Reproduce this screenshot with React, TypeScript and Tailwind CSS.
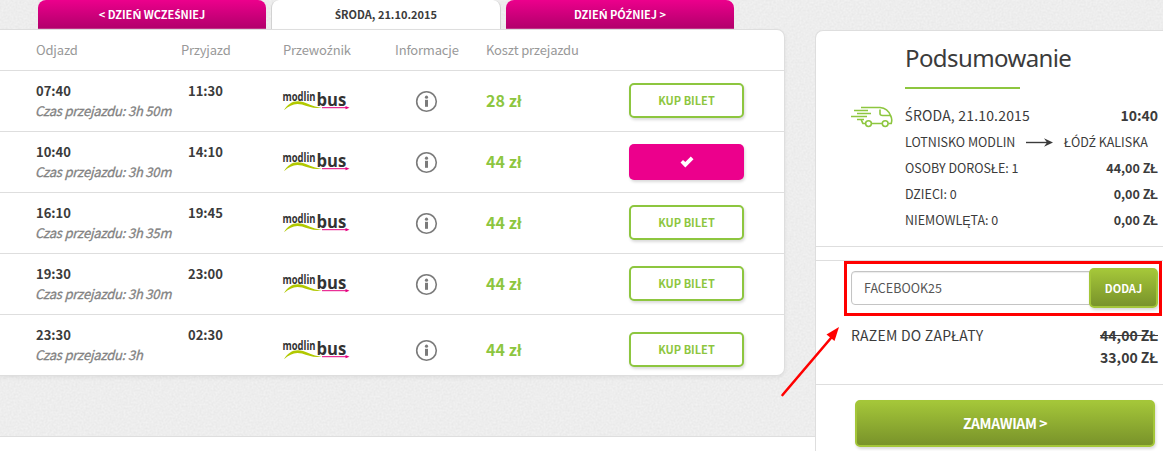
import React from 'react';

interface Ride {
  departure: string;
  arrival: string;
  duration: string;
  price: string;
  selected?: boolean;
}

const rides: Ride[] = [
  { departure: '07:40', arrival: '11:30', duration: '3h 50m', price: '28 zł' },
  { departure: '10:40', arrival: '14:10', duration: '3h 30m', price: '44 zł', selected: true },
  { departure: '16:10', arrival: '19:45', duration: '3h 35m', price: '44 zł' },
  { departure: '19:30', arrival: '23:00', duration: '3h 30m', price: '44 zł' },
  { departure: '23:30', arrival: '02:30', duration: '3h', price: '44 zł' },
];

const passengers = [
  { label: 'OSOBY DOROSŁE: 1', price: '44,00 ZŁ' },
  { label: 'DZIECI: 0', price: '0,00 ZŁ' },
  { label: 'NIEMOWLĘTA: 0', price: '0,00 ZŁ' },
];

const columns = 'grid grid-cols-[152px_95px_133px_70px_143px_115px] pl-[36px]';

// The CJK family has no acute consonants, so those letters come from Noto Sans
const Polish: React.FC<{ text: string }> = ({ text }) => (
  <span className="whitespace-pre">
    {text.split(/([ŚŹŃź])/).map((part, i) =>
      i % 2 ? <span key={i} className="font-['Noto_Sans',sans-serif] leading-none">{part}</span> : part
    )}
  </span>
);

const CarrierLogo: React.FC = () => (
  <svg width="68" height="22" viewBox="0 0 68 22" className="block overflow-visible">
    <text transform="translate(-0.5 10.5) scale(0.82 1)" fontSize="11.5" fontWeight="700" fill="#333" className="font-['Open_Sans',sans-serif]">modlin</text>
    <text transform="translate(33.5 16) scale(0.9 1)" fontSize="18.5" fontWeight="700" fill="#333" className="font-['Open_Sans',sans-serif]">bus</text>
    <path d="M1 20.3C5 12.8 12 9.5 20 12C28 15 32 17.2 39 17.7C31 19 25 16.5 19 14.6C12 12.8 7 15 1 20.3Z" fill="#b1c800" />
    <path d="M39 17.7H64" stroke="#e5007e" strokeWidth="1" />
    <path d="M62.5 16L66.5 17.7L62.5 19.3Z" fill="#e5007e" />
  </svg>
);

const InfoIcon: React.FC = () => (
  <svg width="22" height="22" viewBox="0 0 22 22" className="-ml-px block overflow-visible">
    <circle cx="11.5" cy="11.5" r="9.8" fill="none" stroke="#7b7b7b" strokeWidth="1.6" />
    <circle cx="11.5" cy="7.2" r="1.6" fill="#7b7b7b" />
    <path d="M10 9.8h3v7h-3z" fill="#7b7b7b" />
  </svg>
);

const VanIcon: React.FC = () => (
  <svg width="42" height="22" viewBox="0 0 42 22" fill="none" stroke="#8dc63f" strokeWidth="1.6" className="block">
    <path d="M10 1.5H29C34 2 38 5.5 39.5 9.5C41 12 41 15 40.2 17.5H37.5M31 17.5H20.5M14.5 17.5H12C11 16 11 14.5 10 13.8" />
    <path d="M29 3.5V7.5C29 9 30 9.5 31.5 9.5H39" />
    <path d="M3 4.5H17M6 7.5H20M0 10.5H16M6 13.5H13" />
    <circle cx="17.5" cy="17.6" r="2.9" />
    <circle cx="34.2" cy="17.6" r="2.9" />
  </svg>
);

const RideRow: React.FC<{ ride: Ride; last: boolean }> = ({ ride, last }) => (
  <div className={`${columns} h-[61px] ${last ? '' : 'border-b border-[#dedede]'}`}>
    <div className="pt-[10px] leading-5 whitespace-nowrap">
      <div className="text-[13px] font-bold text-[#3b3b3b]">{ride.departure}</div>
      <div className="-ml-px text-[13px] tracking-[-0.2px] text-[#828282] italic [-webkit-text-stroke:0.3px_#828282]">Czas przejazdu: {ride.duration}</div>
    </div>
    <div className="pt-[10px] text-[13px] leading-5 font-bold text-[#3b3b3b]">{ride.arrival}</div>
    <div className={last ? 'pt-[24px]' : 'pt-[19px]'}>
      <CarrierLogo />
    </div>
    <div className={last ? 'pt-[24px]' : 'pt-[19px]'}>
      <InfoIcon />
    </div>
    <div className={`text-[16px] leading-6 font-bold tracking-[0.1px] text-[#8dc63f] ${last ? 'pt-[22px]' : 'pt-[17px]'}`}>{ride.price}</div>
    <div className={last ? 'pt-[17px]' : 'pt-[12px]'}>
      {ride.selected ? (
        <button className="flex h-[36px] w-[115px] items-center justify-center rounded-[5px] bg-[#ec008c] shadow-[1px_2px_3px_rgba(0,0,0,0.15)]">
          <svg width="14" height="12" viewBox="0 0 14 12">
            <path d="M0.5 6.5L3 4L5.3 6.1L10.8 0.6L13.5 3.2L5.3 11.4Z" fill="#fff" />
          </svg>
        </button>
      ) : (
        <button className="flex h-[35px] w-[115px] items-center justify-center rounded-[5px] border-2 border-[#8dc63f] bg-white text-[11px] font-bold text-[#8dc63f] shadow-[1px_2px_3px_rgba(0,0,0,0.15)]">
          KUP BILET
        </button>
      )}
    </div>
  </div>
);

const Timetable: React.FC = () => (
  <div className="flex w-[815px] shrink-0 flex-col">
    <div className="flex h-[29px] gap-[5px] pl-[38px] text-[11px] font-bold">
      <div className="flex w-[228px] items-center justify-center rounded-t-lg bg-linear-to-b from-[#ec008c] to-[#b1006b] text-white shadow-[inset_0_-1px_0_rgba(255,255,255,0.2)]">
        <Polish text="< DZIEŃ WCZEŚNIEJ" />
      </div>
      <div className="flex w-[230px] items-center justify-center rounded-t-lg border-x border-[#d2d2d2] bg-white text-[#3b3b3b]">
        <Polish text="ŚRODA, 21.10.2015" />
      </div>
      <div className="flex w-[228px] items-center justify-center rounded-t-lg bg-linear-to-b from-[#ec008c] to-[#b1006b] text-white shadow-[inset_0_-1px_0_rgba(255,255,255,0.2)]">
        <Polish text="DZIEŃ PÓŹNIEJ >" />
      </div>
    </div>
    <div className="h-[347px] w-[785px] rounded-r-lg border-y border-r border-[#dedede] bg-white shadow-[0_2px_4px_rgba(0,0,0,0.06)]">
      <div className="flex h-[41px] items-center border-b border-[#dedede] pl-[36px] text-[13px] tracking-[-0.18px] text-[#999]">
        <span className="w-[145px]">Odjazd</span>
        <span className="w-[102px]">Przyjazd</span>
        <span className="w-[112px]"><Polish text="Przewoźnik" /></span>
        <span className="w-[91px]">Informacje</span>
        <span>Koszt przejazdu</span>
      </div>
      {rides.map((ride, i) => (
        <RideRow key={ride.departure} ride={ride} last={i === rides.length - 1} />
      ))}
    </div>
    <div className="mt-[60px] h-[15px] border-t border-[#dedede] bg-white" />
  </div>
);

const Summary: React.FC = () => (
  <div className="mt-[30px] h-[430px] w-[358px] shrink-0 rounded-tl-lg border-t border-l border-[#dedede] bg-white text-[#3b3b3b]">
    <div className="flex h-[216px] flex-col border-b border-[#dedede] pl-[35px]">
      <div className="ml-[54px] h-[58px] w-[115px] border-b-2 border-[#8dc63f] pt-[11px] font-['Noto_Sans',sans-serif] text-[24px] leading-8 tracking-[-0.6px]">Podsumowanie</div>
      <div className="mt-[12px] flex h-[30px] w-[307px] text-[14px]">
        <div className="w-[54px] pt-[5px]">
          <VanIcon />
        </div>
        <span className="leading-[28px] tracking-[0.18px]"><Polish text="ŚRODA, 21.10.2015" /></span>
        <span className="ml-auto leading-[28px] font-bold">10:40</span>
      </div>
      <div className="ml-[54px] w-[253px] text-[12.5px] leading-[26px] whitespace-nowrap">
        <div className="-mt-[2px] flex h-[26px] items-center">
          <span className="w-[121px]">LOTNISKO MODLIN</span>
          <svg width="27" height="10" viewBox="0 0 27 10" className="mr-[11px]">
            <path d="M0 5.5H24" stroke="#3b3b3b" strokeWidth="1.4" />
            <path d="M18 1.3L27 5.5L18 9.7L21 5.5Z" fill="#3b3b3b" />
          </svg>
          <Polish text="ŁÓDŹ KALISKA" />
        </div>
        {passengers.map((p) => (
          <div key={p.label} className="flex h-[26px] justify-between">
            <span>{p.label}</span>
            <span className="font-bold">{p.price}</span>
          </div>
        ))}
      </div>
    </div>
    <div className="mt-[13px] h-[125px] border-y border-[#dedede]">
      <div className="ml-[28px] flex h-[55px] w-[318px] border-3 border-[#ff0000] pt-[4px] pl-[4px]">
        <div className="mt-[3px] flex h-[34px] w-[239px] items-center rounded-l-[4px] border border-[#c4c4c4] pl-[12px] text-[12.5px] text-[#555] shadow-[inset_0_1px_1px_rgba(0,0,0,0.08)]">FACEBOOK25</div>
        <button className="-ml-px flex h-[40px] w-[69px] items-center justify-center rounded-[5px] border-2 border-[#a4c639] bg-linear-to-b from-[#a4c639] to-[#79932a] text-[11px] font-bold text-white shadow-[1px_2px_3px_rgba(0,0,0,0.15)]">DODAJ</button>
      </div>
      <div className="ml-[35px] flex w-[307px] justify-between pt-[8px] text-[14px] leading-[22px]">
        <span className="tracking-[0.25px]">RAZEM DO ZAPŁATY</span>
        <div className="text-right font-bold">
          <div className="line-through">44,00 ZŁ</div>
          <div>33,00 ZŁ</div>
        </div>
      </div>
    </div>
    <button className="mt-[15px] ml-[39px] flex h-[47px] w-[300px] items-center justify-center rounded-[5px] border-2 border-[#a4c639] bg-linear-to-b from-[#a4c639] to-[#79932a] text-[14px] font-bold tracking-[-0.4px] text-white shadow-[1px_2px_3px_rgba(0,0,0,0.15)]">ZAMAWIAM &gt;</button>
  </div>
);

export default function App() {
  return (
    <div className="relative h-[451px] w-[1163px] overflow-hidden bg-[#ededed] font-['Noto_Sans_CJK_SC',sans-serif]">
      <svg width="1163" height="451" className="absolute inset-0">
        <filter id="paper">
          <feTurbulence type="fractalNoise" baseFrequency="0.5" numOctaves="2" />
          <feColorMatrix values="0 0 0 0 0  0 0 0 0 0  0 0 0 0 0  0.06 0 0 0 -0.01" />
        </filter>
        <rect width="1163" height="451" fill="#f2f2f2" />
        <rect width="1163" height="451" filter="url(#paper)" />
      </svg>
      <div className="relative flex">
        <Timetable />
        <Summary />
      </div>
      {/* pointer towards the discount code field */}
      <svg width="70" height="80" viewBox="0 0 70 80" className="absolute top-[320px] left-[775px]">
        <path d="M7.5 75L56 18" stroke="#ff0000" strokeWidth="2.6" strokeLinecap="round" />
        <path d="M64 7L59.5 21L51.5 14.5Z" fill="#ff0000" />
      </svg>
    </div>
  );
}
